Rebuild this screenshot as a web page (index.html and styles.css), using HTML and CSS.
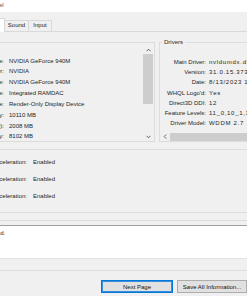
FILE: index.html
```html
<!DOCTYPE html>
<html lang="en">
<head>
  <meta charset="UTF-8" />
  <meta name="viewport" content="width=device-width, initial-scale=1.0"/>
  <title>DirectX Diagnostic Tool</title>
  <link rel="stylesheet" href="styles.css">
</head>
<body>
  <div class="titlebar"><span class="title">el</span></div>

  <div class="window">
    <div class="tabs">
      <div class="tab active">Display 1</div>
      <div class="tab sound">Sound</div>
      <div class="tab input">Input</div>
    </div>

    <div class="panel">
      <div class="top-row">
        <div class="group device">
          <div class="group-title">Device</div>
          <div class="device-body">
            <div class="info device-list">
              <span class="label">Name:</span><span>NVIDIA GeForce 940M</span>
              <span class="label">Manufacturer:</span><span>NVIDIA</span>
              <span class="label">Chip Type:</span><span>NVIDIA GeForce 940M</span>
              <span class="label">DAC Type:</span><span>Integrated RAMDAC</span>
              <span class="label">Device Type:</span><span>Render-Only Display Device</span>
              <span class="label">Approx. Total Memory:</span><span>10110 MB</span>
              <span class="label">Display Memory (VRAM):</span><span>2008 MB</span>
              <span class="label">Shared Memory:</span><span>8102 MB</span>
            </div>
            <div class="vscroll">
              <div class="sbtn up">
                <svg width="5" height="4" viewBox="0 0 5 4"><polyline points="0.5,3.2 2.5,1.2 4.5,3.2" fill="none" stroke="#606060" stroke-width="1"/></svg>
              </div>
              <div class="vthumb"></div>
              <div class="vtrack"></div>
              <div class="sbtn down">
                <svg width="5" height="4" viewBox="0 0 5 4"><polyline points="0.5,0.8 2.5,2.8 4.5,0.8" fill="none" stroke="#606060" stroke-width="1"/></svg>
              </div>
            </div>
          </div>
        </div>

        <div class="group drivers">
          <div class="group-title">Drivers</div>
          <div class="drivers-body">
            <div class="info drivers-list">
              <span class="label">Main Driver:</span><span class="val">nvldumdx.dll,nvldumdx.dll,nvldumdx.dll,nvldumdx.dll</span>
              <span class="label">Version:</span><span class="val">31.0.15.3734</span>
              <span class="label">Date:</span><span class="val">8/13/2023 1:00:00 AM</span>
              <span class="label">WHQL Logo'd:</span><span class="val">Yes</span>
              <span class="label">Direct3D DDI:</span><span class="val">12</span>
              <span class="label">Feature Levels:</span><span class="val">11_0,10_1,10_0,9_3,9_2,9_1</span>
              <span class="label">Driver Model:</span><span class="val">WDDM 2.7</span>
            </div>
            <div class="hscroll">
              <div class="sbtn left">
                <svg width="4" height="5" viewBox="0 0 4 5"><polyline points="3.2,0.5 1.2,2.5 3.2,4.5" fill="none" stroke="#606060" stroke-width="1"/></svg>
              </div>
              <div class="hthumb"></div>
            </div>
          </div>
        </div>
      </div>

      <div class="group features">
        <div class="group-title">DirectX Features</div>
        <div class="info features-list">
          <span class="label">DirectDraw Acceleration:</span><span>Enabled</span>
          <span class="label">Direct3D Acceleration:</span><span>Enabled</span>
          <span class="label">AGP Texture Acceleration:</span><span>Enabled</span>
        </div>
      </div>

      <div class="group notes">
        <div class="group-title">Notes</div>
        <div class="notes-box">&bull; No problems found.</div>
      </div>
    </div>

    <div class="buttons">
      <button class="help">Help</button>
      <button class="next">Next Page</button>
      <button class="save">Save All Information...</button>
      <button class="exit">Exit</button>
    </div>
  </div>
</body>
</html>
```

FILE: styles.css
```css
* {
  box-sizing: border-box;
}
body {
  margin: 0;
  width: 247px;
  height: 296px;
  overflow: hidden;
  background: #f0f0f0;
  font-family: 'Liberation Sans', Tahoma, Arial, sans-serif;
  font-size: 6px;
  color: #1e1e1e;
}
.titlebar {
  height: 12px;
  background: #fff;
}
.title {
  display: block;
  margin-left: -1px;
  line-height: 10px;
  color: #8e2f2f;
}
.window {
  width: 480px;
  margin-left: -110px;
}

/* tabs */
.tabs {
  display: flex;
  align-items: flex-end;
  margin-top: 8px;
  padding-left: 60px;
  height: 12px;
  border-bottom: 1px solid #d9d9d9;
}
.tab {
  height: 11px;
  line-height: 9px;
  text-align: center;
  border: 1px solid #d9d9d9;
  border-bottom: none;
  background: #f0f0f0;
}
.tab.active {
  width: 55px;
  height: 14px;
  margin-bottom: -1px;
  background: #fff;
}
.tab.sound {
  width: 25px;
  margin-left: -1px;
}
.tab.input {
  width: 24px;
  margin-left: -1px;
}

/* panel & group boxes */
.panel {
  padding: 10px 0 0 10px;
}
.group {
  border: 1px solid #dcdcdc;
}
.group-title {
  width: fit-content;
  margin: -5px 0 0 2px;
  padding: 0 2px;
  line-height: 8px;
  background: #f0f0f0;
}
.top-row {
  display: flex;
  gap: 4px;
  height: 100px;
}
.group.device {
  flex: none;
  width: 255px;
}
.group.drivers {
  flex: 1;
  min-width: 0;
}
.info {
  display: grid;
  align-content: start;
  white-space: nowrap;
  overflow: hidden;
}
.label {
  text-align: right;
}

.device-body {
  display: flex;
  height: 95px;
}
.device-list {
  flex: 1;
  min-width: 0;
  padding: 9.5px 0 0 4px;
  grid-template-columns: 99px 1fr;
  column-gap: 5px;
  line-height: 10.85px;
}
.vscroll {
  flex: none;
  width: 10px;
  margin-right: 1px;
  display: flex;
  flex-direction: column;
}
.sbtn {
  display: flex;
  align-items: center;
  justify-content: center;
}
.sbtn.up {
  height: 8px;
}
.sbtn.down {
  height: 9px;
}
.vthumb {
  height: 50px;
  background: #cdcdcd;
}
.vtrack {
  flex: 1;
}

.drivers-body {
  display: flex;
  flex-direction: column;
  height: 95px;
}
.drivers-list {
  flex: 1;
  min-height: 0;
  padding-top: 11px;
  grid-template-columns: 46px 1fr;
  column-gap: 3px;
  line-height: 10.17px;
}
.drivers-list .val {
  letter-spacing: 0.7px;
}
.hscroll {
  flex: none;
  height: 9px;
  display: flex;
}
.sbtn.left {
  width: 10px;
}
.hthumb {
  flex: 1;
  margin-top: 1px;
  background: #cdcdcd;
}

.features {
  margin-top: 7px;
  height: 64px;
}
.features-list {
  padding: 1px 0 0 4px;
  grid-template-columns: 122px auto;
  column-gap: 6px;
  line-height: 17px;
}

.notes {
  margin-top: 7px;
  height: 51px;
}
.notes-box {
  height: 34px;
  margin-top: 1px;
  padding: 3px 0 0 47px;
  line-height: 8px;
  white-space: nowrap;
  background: #fff;
  border: 1px solid #e3e3e3;
  border-top-color: #a0a0a0;
}

/* bottom buttons */
.buttons {
  display: flex;
  gap: 4px;
  margin-top: 9px;
  padding-left: 10px;
}
button {
  flex: none;
  height: 13px;
  padding: 0;
  font-family: 'Liberation Sans', Tahoma, Arial, sans-serif;
  font-size: 6px;
  color: #111;
  background: #e1e1e1;
  border: 1px solid #adadad;
}
button.help {
  width: 70px;
  margin-right: 127px;
}
button.next {
  width: 72px;
  border-color: #0078d7;
  box-shadow: inset 0 0 0 1px #3a8fdc;
}
button.save {
  width: 70px;
}
button.exit {
  width: 70px;
}
```
